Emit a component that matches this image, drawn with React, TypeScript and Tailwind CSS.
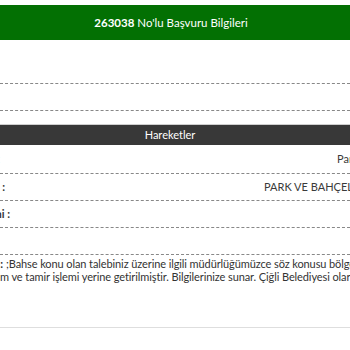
export default function App() {
  const rows = [
    { label: "Başvuru Konusu :", labelEnd: "w-[0px]", value: "Park Bakım Talebi", valueStart: "pl-[337px]" },
    { label: "Müdürlük :", labelEnd: "w-[5px]", value: "PARK VE BAHÇELER MÜDÜRLÜĞÜ", valueStart: "pl-[264px]" },
    { label: "Başvuru Tarihi :", labelEnd: "w-[10px]", value: "", valueStart: "pl-[250px]" },
    { label: "", labelEnd: "w-[5px]", value: "", valueStart: "pl-[250px]" },
  ];

  return (
    <div
      className="w-[350px] h-[350px] overflow-hidden bg-white text-[11px] text-[#333]"
      style={{ fontFamily: "Lato, 'Noto Sans', sans-serif" }}
    >
      <div className="pt-[5px]">
        <div className="h-[35px] bg-[#037003] text-white text-[11.5px] flex items-center justify-center pr-[8px]">
          <span>
            <b>263038</b> No'lu Başvuru Bilgileri
          </span>
        </div>

        <div className="h-[44px] border-b border-dashed border-[#888]" />
        <div className="h-[27px] border-b border-dashed border-[#888]" />

        <div className="mt-[13px] border-t border-[#cfcfcf] h-[21px] bg-[#383838] text-white flex items-center justify-center pr-[10px]">
          Hareketler
        </div>

        {rows.map((r, i) => (
          <div
            key={i}
            className={`${i === 0 ? "h-[29px]" : "h-[27px]"} border-b border-dashed border-[#888] flex items-center whitespace-nowrap relative`}
          >
            <div className={`${r.labelEnd} shrink-0 flex justify-end`}>
              <span className="font-bold">{r.label}</span>
            </div>
            <div className={`absolute left-0 top-0 h-full flex items-center ${r.valueStart} text-[#3a3a3a]`}>
              {r.value}
            </div>
          </div>
        ))}

        <div className="pt-[2px] leading-[13px] whitespace-nowrap tracking-[-0.1px]">
          <div className="flex">
            <div className="w-[3px] shrink-0 flex justify-end">
              <span className="font-bold">Açıklama :</span>
            </div>
            <span className="pl-[3px]">;Bahse konu olan talebiniz üzerine ilgili müdürlüğümüzce söz konusu bölgede bakım</span>
          </div>
          <div className="flex">
            <div className="w-[9px] shrink-0 flex justify-end">
              <span>gerekli bakım</span>
            </div>
            <span>&nbsp;ve tamir işlemi yerine getirilmiştir. Bilgilerinize sunar. Çiğli Belediyesi olarak</span>
          </div>
        </div>

        <div className="mt-[44px] border-t border-[#dedede]" />
      </div>
    </div>
  );
}
